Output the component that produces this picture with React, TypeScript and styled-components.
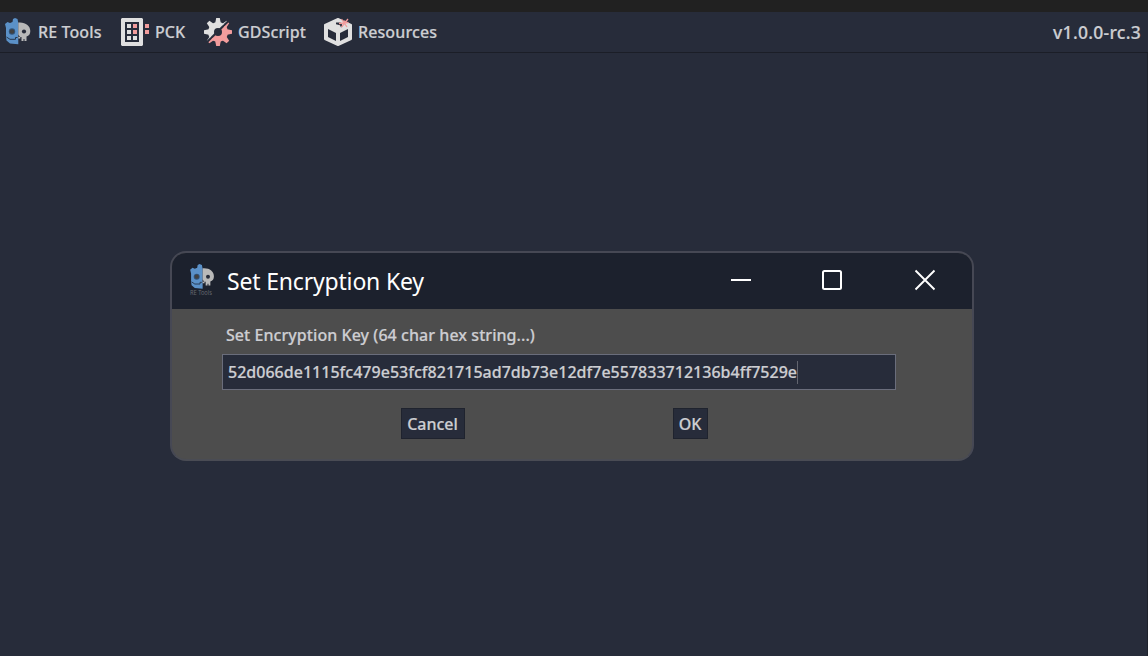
import React from "react";
import styled, { createGlobalStyle } from "styled-components";

const GlobalStyle = createGlobalStyle`
  * { box-sizing: border-box; }
  body {
    margin: 0;
    background: #272c3a;
    color: #cdced2;
    font-family: "Noto Sans", "Open Sans", sans-serif;
    font-size: 16px;
    font-weight: 500;
  }
`;

const Screen = styled.div`
  display: flex;
  flex-direction: column;
  height: 656px;
  overflow: hidden;
  -webkit-text-stroke: 0.2px;
`;

const TopStrip = styled.div`
  height: 12px;
  background: #212121;
`;

const MenuBar = styled.nav`
  display: flex;
  align-items: center;
  height: 41px;
  padding: 0 7px 1px 4px;
  border-bottom: 1px solid #1b1e27;
`;

const MenuItem = styled.div<{ $width: number; $gap: number }>`
  display: flex;
  align-items: center;
  gap: ${(p) => p.$gap}px;
  width: ${(p) => p.$width}px;
  line-height: 24px;
  letter-spacing: 0.1px;
  white-space: nowrap;
  svg { flex: none; display: block; }
`;

const Version = styled.div`
  margin-left: auto;
  font-size: 17.5px;
  line-height: 24px;
  letter-spacing: 0.28px;
  white-space: nowrap;
`;

const Workspace = styled.main`
  flex: 1;
  padding: 198px 0 0 170px;
  border-right: 1px solid #1e222c;
`;

const Dialog = styled.section`
  width: 804px;
  height: 210px;
  border: 2px solid #464854;
  border-bottom-color: #4a4c54;
  border-radius: 16px;
  background: #4d4d4d;
  overflow: hidden;
`;

const TitleBar = styled.header`
  display: flex;
  align-items: center;
  height: 56px;
  padding: 0 36px 2px 16px;
  background: #1c212d;
  color: #fff;
`;

const Title = styled.h1`
  margin: 2px 0 0 11px;
  font-size: 23px;
  font-weight: 400;
  line-height: 32px;
  letter-spacing: -0.18px;
  white-space: nowrap;
  -webkit-text-stroke: 0;
`;

const WindowControls = styled.div`
  display: flex;
  margin-left: auto;
  svg { display: block; }
  svg + svg { margin-left: 69px; }
  svg:last-child { margin-left: 71px; }
`;

const Form = styled.div`
  width: 674px;
  margin-left: 50px;
  padding-top: 14px;
`;

const Label = styled.label`
  display: block;
  padding-left: 4px;
  line-height: 24px;
  letter-spacing: 0.06px;
  white-space: nowrap;
`;

const KeyField = styled.div`
  display: flex;
  align-items: center;
  height: 36px;
  margin-top: 7px;
  padding-left: 5px;
  border: 1px solid #6a6d7b;
  background: #272c3a;
  letter-spacing: 0.016px;
  white-space: nowrap;
`;

const Caret = styled.span`
  width: 1px;
  height: 23px;
  background: #62656f;
`;

const Actions = styled.div`
  display: flex;
  gap: 208px;
  padding: 18px 0 0 179px;
`;

const Button = styled.button<{ $width: number }>`
  width: ${(p) => p.$width}px;
  height: 31px;
  padding: 0 1px 0 0;
  border: 1px solid #1f232e;
  background: #272c3a;
  color: inherit;
  font: inherit;
  line-height: 24px;
`;

const Skull = () => (
  <>
    <path fill="#5b91c8" d="M14.300 5 13.500 1 11 0 9 1 8.500 4 6 5 3.500 4 1 6 2 10v8.500l.5 4L6 25.500l8.300.7Z" />
    <path fill="#b9b9b9" d="M14.300 4.500c7-.7 12 3 12 8.500 0 3-1.300 5-3.800 5.500V23h-2v-2h-1v2h-2v-4h-1.200v1.500h-2Z" />
    <circle cx="8" cy="13.500" r="3.200" fill="#31557d" />
    <circle cx="8" cy="13.500" r="2.300" fill="#414141" />
    <circle cx="20" cy="13.500" r="2.100" fill="#272c3a" />
    <path d="M14.300 16.500 16 19h-1.700Z" fill="#272c3a" />
    <path d="M2.500 19 6 21.300h5.500v-1.800h2" fill="none" stroke="#26384f" strokeWidth="1" />
  </>
);

const ToolsIcon = () => (
  <svg width="27" height="28" viewBox="0 0 27 28"><Skull /></svg>
);

const AppIcon = () => (
  <svg width="28" height="34" viewBox="0 0 28 34">
    <g transform="translate(1.2 1) scale(.94)"><Skull /></g>
    <text x="2" y="32" fontSize="6.500" fontWeight="400" textLength="22" lengthAdjust="spacingAndGlyphs" fill="#666970" stroke="none">RE Tools</text>
  </svg>
);

const PckIcon = () => (
  <svg width="28" height="28" viewBox="0 0 28 28">
    <path fill="#e0e0e0" fillRule="evenodd" d="M1 0h20l1 1v26l-1 1H1l-1-1V1ZM4 4v20h14V4Z" />
    <path fill="#e0e0e0" d="M6 6h4v4H6ZM6 12h4v4H6ZM6 18h4v4H6ZM12 18h4v4h-4Z" />
    <path fill="#f29c9c" d="M12 6h4v4h-4ZM12 12h4v4h-4ZM24 6h4v4h-4ZM24 12h4v4h-4Z" />
  </svg>
);

const Gear = () => (
  <>
    <circle cx="14" cy="14" r="7" fill="none" stroke="currentColor" strokeWidth="6" />
    {[0, 45, 90, 135, 180, 225, 270, 315].map((angle) => (
      <path key={angle} transform={`rotate(${angle} 14 14)`} d="M12.200 0h3.600L17 6h-6Z" fill="currentColor" />
    ))}
  </>
);

const ScriptIcon = () => (
  <svg width="28" height="28" viewBox="0 0 28 28">
    <clipPath id="gear-upper"><path d="M0 0h26L0 25.500Z" /></clipPath>
    <clipPath id="gear-lower"><path d="M28 1v27H2v-1.500Z" /></clipPath>
    <g clipPath="url(#gear-upper)" color="#e0e0e0"><Gear /></g>
    <g clipPath="url(#gear-lower)" color="#f29c9c"><Gear /></g>
  </svg>
);

const ResourceIcon = () => (
  <svg width="28" height="28" viewBox="0 0 28 28">
    <path fill="#e0e0e0" stroke="#e0e0e0" strokeWidth="2" strokeLinejoin="round" d="M14 1 27 7v14l-13 6L1 21V7Z" />
    <path fill="#272c3a" d="M4 11l8 4v8l-8-4ZM24 11l-8 4v8l8-4ZM12 4.500h4.500L19 8l-2 1.500-1-2.300-4-1Z" />
    <path fill="#272c3a" d="m17 0 11 3v2L17 1.500Z" />
    <path stroke="#f29c9c" strokeWidth="1.300" fill="none" d="m17.500 1 5.500 8M24 1l-6.500 8M15 5.500l9.500-1M20.500 2.500l.5 4" />
  </svg>
);

export default function App() {
  return (
    <Screen>
      <GlobalStyle />
      <TopStrip />
      <MenuBar>
        <MenuItem $width={117} $gap={7}><ToolsIcon />RE Tools</MenuItem>
        <MenuItem $width={83} $gap={6}><PckIcon />PCK</MenuItem>
        <MenuItem $width={120} $gap={6}><ScriptIcon />GDScript</MenuItem>
        <MenuItem $width={120} $gap={6}><ResourceIcon />Resources</MenuItem>
        <Version>v1.0.0-rc.3</Version>
      </MenuBar>
      <Workspace>
        <Dialog>
          <TitleBar>
            <AppIcon />
            <Title>Set Encryption Key</Title>
            <WindowControls>
              <svg width="22" height="22" viewBox="0 0 22 22"><path d="M1 11h20" stroke="#fff" strokeWidth="2" /></svg>
              <svg width="22" height="22" viewBox="0 0 22 22"><rect x="2" y="2" width="18" height="18" rx="1.500" stroke="#fff" strokeWidth="2" fill="none" /></svg>
              <svg width="22" height="22" viewBox="0 0 22 22"><path d="m1.500 1.500 19 19m0-19-19 19" stroke="#fff" strokeWidth="1.900" /></svg>
            </WindowControls>
          </TitleBar>
          <Form>
            <Label>Set Encryption Key (64 char hex string...)</Label>
            <KeyField>
              <span>52d066de1115fc479e53fcf821715ad7db73e12df7e557833712136b4ff7529e</span>
              <Caret />
            </KeyField>
            <Actions>
              <Button $width={64}>Cancel</Button>
              <Button $width={35}>OK</Button>
            </Actions>
          </Form>
        </Dialog>
      </Workspace>
    </Screen>
  );
}
